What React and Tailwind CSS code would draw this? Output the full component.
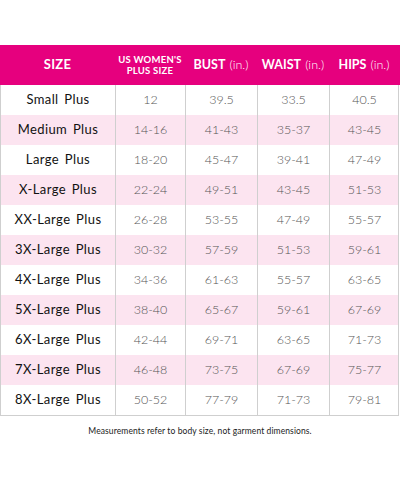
const rows = [
  ['Small Plus', '12', '39.5', '33.5', '40.5'],
  ['Medium Plus', '14-16', '41-43', '35-37', '43-45'],
  ['Large Plus', '18-20', '45-47', '39-41', '47-49'],
  ['X-Large Plus', '22-24', '49-51', '43-45', '51-53'],
  ['XX-Large Plus', '26-28', '53-55', '47-49', '55-57'],
  ['3X-Large Plus', '30-32', '57-59', '51-53', '59-61'],
  ['4X-Large Plus', '34-36', '61-63', '55-57', '63-65'],
  ['5X-Large Plus', '38-40', '65-67', '59-61', '67-69'],
  ['6X-Large Plus', '42-44', '69-71', '63-65', '71-73'],
  ['7X-Large Plus', '46-48', '73-75', '67-69', '75-77'],
  ['8X-Large Plus', '50-52', '77-79', '71-73', '79-81'],
]

function App() {
  return (
    <div className="w-[400px] h-[480px] bg-white pt-[45px] font-['Lato',sans-serif]">
      {/* header band */}
      <div className="grid grid-cols-[115px_70px_72px_72px_70px] h-[40px] bg-[#e6007e] text-white">
        <div className="flex items-center justify-center text-[13px] font-bold tracking-wide">SIZE</div>
        <div className="flex items-center justify-center text-center text-[9.5px] font-bold leading-[11px] tracking-wide">
          US WOMEN'S<br />PLUS SIZE
        </div>
        <div className="flex items-center justify-center text-[12.5px]">
          <span className="font-bold">BUST</span>
          <span className="ml-1 font-light">(in.)</span>
        </div>
        <div className="flex items-center justify-center text-[12.5px]">
          <span className="font-bold">WAIST</span>
          <span className="ml-1 font-light">(in.)</span>
        </div>
        <div className="flex items-center justify-center text-[12.5px]">
          <span className="font-bold">HIPS</span>
          <span className="ml-1 font-light">(in.)</span>
        </div>
      </div>

      {/* body rows */}
      <div className="w-[399px] border-l border-r border-b border-[#cfcfcf]">
        {rows.map((r, i) => (
          <div
            key={r[0]}
            className={`grid grid-cols-[115px_70px_72px_72px_69px] h-[30px] ${i % 2 === 1 ? 'bg-[#fce4f0]' : 'bg-white'}`}
          >
            <div className="flex items-center justify-center text-[13px] font-normal text-[#111] tracking-[0.4px] [word-spacing:2px] border-r border-[#cfcfcf]">
              {r[0]}
            </div>
            {r.slice(1).map((v, j) => (
              <div
                key={j}
                className={`flex items-center justify-center text-[12.5px] font-light text-[#555] ${j < 3 ? 'border-r border-[#cfcfcf]' : ''}`}
              >
                {v}
              </div>
            ))}
          </div>
        ))}
      </div>

      <p className="mt-[9px] text-center text-[8.5px] text-[#222] tracking-[0.1px]">
        Measurements refer to body size, not garment dimensions.
      </p>
    </div>
  )
}

export default App
